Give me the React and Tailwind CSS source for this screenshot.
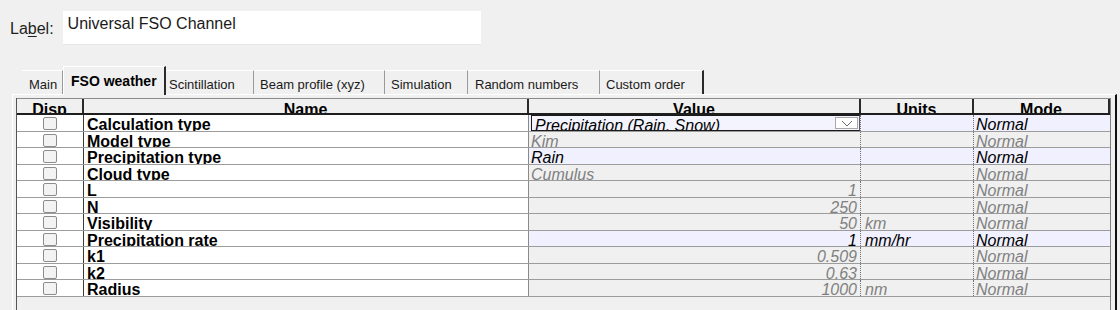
import React from "react"

const rows = [
  { name: "Calculation type", value: "Precipitation (Rain, Snow)", active: true, combo: true },
  { name: "Model type", value: "Kim" },
  { name: "Precipitation type", value: "Rain", active: true },
  { name: "Cloud type", value: "Cumulus" },
  { name: "L", value: "1", num: true },
  { name: "N", value: "250", num: true },
  { name: "Visibility", value: "50", num: true, unit: "km" },
  { name: "Precipitation rate", value: "1", num: true, unit: "mm/hr", active: true },
  { name: "k1", value: "0.509", num: true },
  { name: "k2", value: "0.63", num: true },
  { name: "Radius", value: "1000", num: true, unit: "nm" },
]

const tabs = [
  { label: "Main", w: "w-[41px]", pl: "pl-[7px]" },
  { label: "FSO weather", w: "w-[103px]", pl: "pl-[7px]", active: true },
  { label: "Scintillation", w: "w-[88px]", pl: "pl-[3px]" },
  { label: "Beam profile (xyz)", w: "w-[131px]", pl: "pl-[6px]" },
  { label: "Simulation", w: "w-[83px]", pl: "pl-[6px]" },
  { label: "Random numbers", w: "w-[132px]", pl: "pl-[7px]" },
  { label: "Custom order", w: "w-[104px]", pl: "pl-[6px]", dark: true },
]

function Checkbox() {
  return (
    <div className="mx-auto mt-[2px] w-[14px] h-[13px] rounded-[2px] border border-[#8c8c8c] bg-[#f3f3f3]" />
  )
}

function Combo({ text }) {
  return (
    <div className="flex h-full border border-[#1a1a1a] border-r-[#5a5a5a] bg-[#f4f4ff]">
      <span className="pl-[3px] leading-[19px] italic text-black whitespace-nowrap overflow-hidden">{text}</span>
      <div className="ml-auto mr-[1px] mt-[1px] w-[23px] h-[12px] border border-[#a8a8a8] bg-white flex items-center justify-center">
        <svg width="12" height="7" viewBox="0 0 12 7">
          <path d="M1 1 L6 6 L11 1" fill="none" stroke="#6a6a6a" strokeWidth="1" />
        </svg>
      </div>
    </div>
  )
}

export default function App() {
  return (
    <div className="w-[1120px] h-[310px] bg-[#f0f0f0] overflow-hidden font-['Liberation_Sans',Arial,sans-serif]">
      <div className="flex items-start pt-[11px] pl-[10px]">
        <span className="mt-[9px] text-[16px] leading-[18px] text-[#1f1f1f]">
          La<span className="underline underline-offset-2">b</span>el:
        </span>
        <div className="ml-[9px] w-[418px] h-[34px] bg-white border-b border-[#e6e6e6] pl-[5px] pt-[4px] text-[16px] leading-[18px] text-[#1a1a1a]">
          Universal FSO Channel
        </div>
      </div>

      <div className="mt-[21px] flex items-end h-[28px] pl-[22px]">
        {tabs.map((t) =>
          t.active ? (
            <div
              key={t.label}
              className={`${t.w} ${t.pl} relative z-10 -mb-[1px] h-[29px] pt-[6px] bg-[#f0f0f0] border-t border-l border-white border-r-2 border-r-[#2a2a2a] text-[14px] leading-[16px] font-bold text-black whitespace-nowrap`}
            >
              {t.label}
            </div>
          ) : (
            <div
              key={t.label}
              className={`${t.w} ${t.pl} h-[24px] pt-[6px] border-t border-white ${t.dark ? "border-r-2 border-r-[#2a2a2a]" : "border-r border-r-[#9a9a9a]"} text-[13px] leading-[15px] text-[#1a1a1a] whitespace-nowrap`}
            >
              {t.label}
            </div>
          )
        )}
      </div>

      <div className="ml-[12px] w-[1105px] h-[230px] border-t border-l border-white border-r-2 border-r-[#111] pl-[3px] pt-[3px]">
        <div className="w-[1095px] h-[240px] border-l border-r border-[#555] border-r-[#808080] bg-[#f0f0f0]">
          <div className="flex h-[17px] border-t border-[#8a8a8a] border-b-2 border-b-[#1e1e1e] bg-[#f0f0f0] text-[16px] leading-[22px] font-bold text-black">
            <div className="w-[67px] border-r-2 border-[#2a2a2a] text-center overflow-hidden">Disp</div>
            <div className="w-[445px] border-r-2 border-[#2a2a2a] text-center overflow-hidden">Name</div>
            <div className="w-[332px] border-r-2 border-[#2a2a2a] text-center overflow-hidden">Value</div>
            <div className="w-[113px] border-r-2 border-[#2a2a2a] text-center overflow-hidden">Units</div>
            <div className="w-[136px] border-r-2 border-[#2a2a2a] text-center overflow-hidden">Mode</div>
          </div>

          {rows.map((r) => {
            const bg = r.active ? "bg-[#f0f0ff]" : "bg-[#f0f0f0]"
            const fg = r.active ? "text-black" : "text-[#808080]"
            return (
              <div key={r.name} className="flex h-[16.5px] border-b border-[#9c9c9c] text-[16px] leading-[20px]">
                <div className="w-[67px] h-full bg-white border-r border-[#3c3c3c]">
                  <Checkbox />
                </div>
                <div className="w-[445px] h-full bg-white border-r border-[#8a8a8a] pl-[3px] font-bold text-black overflow-hidden whitespace-nowrap">
                  {r.name}
                </div>
                <div
                  className={`w-[332px] h-full ${bg} border-r border-dotted border-[#6e6e6e] overflow-hidden whitespace-nowrap italic ${fg} ${r.num ? "text-right pr-[3px]" : "pl-[2px]"}`}
                >
                  {r.combo ? <Combo text={r.value} /> : r.value}
                </div>
                <div className={`w-[113px] h-full ${bg} border-r border-dotted border-[#6e6e6e] pl-[4px] italic ${fg} overflow-hidden whitespace-nowrap`}>
                  {r.unit || ""}
                </div>
                <div className={`w-[136px] h-full ${bg} pl-[2px] italic ${fg} overflow-hidden whitespace-nowrap`}>
                  Normal
                </div>
              </div>
            )
          })}
        </div>
      </div>
    </div>
  )
}
